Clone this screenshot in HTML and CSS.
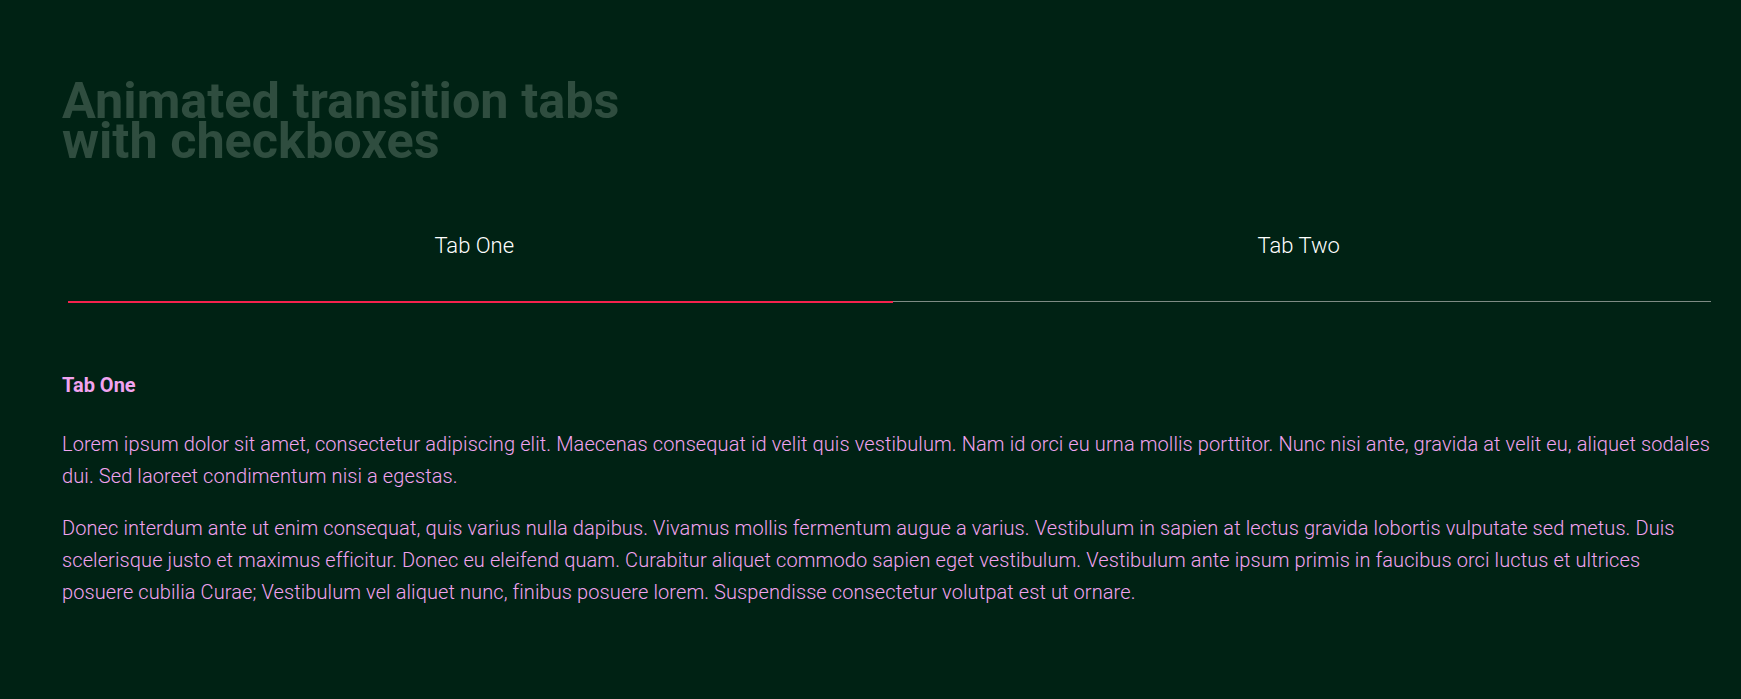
FILE: index.html
```html
<!DOCTYPE html>
<html lang="en">
<head>
<meta charset="utf-8">
<title>Animated transition tabs with checkboxes</title>
<link rel="stylesheet" href="styles.css">
</head>
<body>
<main class="page">
  <h1 class="title">Animated transition tabs<br>with checkboxes</h1>
  <section class="tabs">
    <div class="tab-labels">
      <label class="tab-label">Tab One</label>
      <label class="tab-label">Tab Two</label>
    </div>
    <div class="track"><div class="indicator"></div></div>
    <div class="panel">
      <h2 class="panel-title">Tab One</h2>
      <p class="panel-text">Lorem ipsum dolor sit amet, consectetur adipiscing elit. Maecenas consequat id velit quis vestibulum. Nam id orci eu urna mollis porttitor. Nunc nisi ante, gravida at velit eu, aliquet sodales dui. Sed laoreet condimentum nisi a egestas.</p>
      <p class="panel-text">Donec interdum ante ut enim consequat, quis varius nulla dapibus. Vivamus mollis fermentum augue a varius. Vestibulum in sapien at lectus gravida lobortis vulputate sed metus. Duis scelerisque justo et maximus efficitur. Donec eu eleifend quam. Curabitur aliquet commodo sapien eget vestibulum. Vestibulum ante ipsum primis in faucibus orci luctus et ultrices posuere cubilia Curae; Vestibulum vel aliquet nunc, finibus posuere lorem. Suspendisse consectetur volutpat est ut ornare.</p>
    </div>
  </section>
</main>
</body>
</html>
```

FILE: styles.css
```css
html, body {
  margin: 0;
  padding: 0;
  background: #002214;
}
body {
  font-family: Roboto, "Liberation Sans", sans-serif;
  color: #f2a3f0;
}
.page {
  padding: 81px 30px 0 62px;
}
.title {
  margin: 0;
  font-size: 50.4px;
  line-height: 40px;
  font-weight: 700;
  color: #2f4d3f;
}
.tabs {
  margin-top: 73px;
}
.tab-labels {
  display: flex;
}
.tab-label {
  flex: 1;
  text-align: center;
  font-size: 22px;
  line-height: 24px;
  font-weight: 300;
  color: #ffffff;
  padding-bottom: 43px;
}
.track {
  margin-left: 6px;
  height: 1px;
  background: #7e8b84;
}
.indicator {
  width: 825px;
  height: 2px;
  background: #f5224d;
}
.panel {
  padding-top: 67px;
}
.panel-title {
  margin: 0 0 27px;
  font-size: 20px;
  line-height: 32px;
  font-weight: 700;
}
.panel-text {
  margin: 0 0 20px;
  font-size: 20px;
  line-height: 32px;
  font-weight: 300;
  letter-spacing: 0.1px;
}
```
